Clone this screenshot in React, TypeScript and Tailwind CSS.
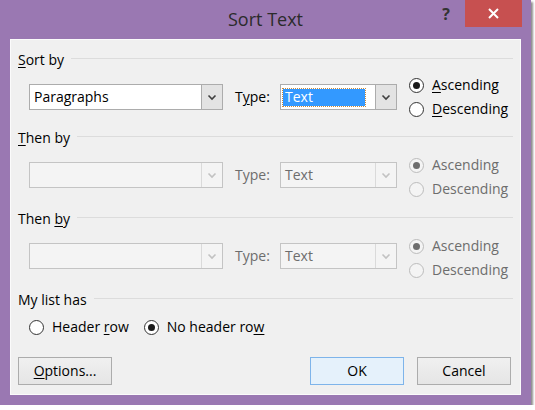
import React from 'react';

const Chevron: React.FC<{ disabled?: boolean }> = ({ disabled }) => (
  <svg width="10" height="7" viewBox="0 0 10 7" className="block">
    <polyline
      points="1.5,1.5 5,5 8.5,1.5"
      fill="none"
      stroke={disabled ? '#c2c2c2' : '#404040'}
      strokeWidth="1.6"
    />
  </svg>
);

interface ComboProps {
  value?: string;
  width: string;
  disabled?: boolean;
  focused?: boolean;
}

const Combo: React.FC<ComboProps> = ({ value, width, disabled, focused }) => (
  <div
    className={`flex h-[26px] border ${width} ${
      disabled ? 'border-[#c4c4c4] bg-[#f4f4f4]' : 'border-[#acacac] bg-white'
    }`}
  >
    <div className={`flex flex-1 items-center ${focused ? 'pl-[2px] pr-[10px]' : 'pl-[4px]'}`}>
      {focused ? (
        <span className="flex h-[17px] w-full items-center bg-[#3399ff] px-[2px] text-white outline-1 outline-dotted outline-[#c98a3c]">
          {value}
        </span>
      ) : (
        <span className={disabled ? 'text-[#6d6d6d]' : 'text-black'}>{value}</span>
      )}
    </div>
    <div
      className={`flex w-[21px] items-center justify-center border-l ${
        disabled ? 'border-[#dadada] bg-[#f4f4f4]' : 'border-[#acacac] bg-[#e3e3e3]'
      }`}
    >
      <Chevron disabled={disabled} />
    </div>
  </div>
);

const Radio: React.FC<{ checked?: boolean; disabled?: boolean }> = ({ checked, disabled }) => (
  <span
    className={`flex h-[15px] w-[15px] shrink-0 items-center justify-center rounded-full border ${
      disabled ? 'border-[#bcbcbc] bg-[#f4f4f4]' : 'border-[#333333] bg-white'
    }`}
  >
    {checked && (
      <span
        className={`h-[7px] w-[7px] rounded-full ${disabled ? 'bg-[#6d6d6d]' : 'bg-[#1a1a1a]'}`}
      />
    )}
  </span>
);

const RadioItem: React.FC<{
  checked?: boolean;
  disabled?: boolean;
  children: React.ReactNode;
}> = ({ checked, disabled, children }) => (
  <label className="flex h-[24px] items-center gap-[8px]">
    <Radio checked={checked} disabled={disabled} />
    <span className={disabled ? 'text-[#6d6d6d]' : 'text-black'}>{children}</span>
  </label>
);

const Heading: React.FC<{ children: React.ReactNode }> = ({ children }) => (
  <div className="flex h-[18px] items-center">
    <span className="text-black">{children}</span>
    <span className="mb-[3px] ml-[7px] h-px flex-1 bg-[#dcdcdc]" />
  </div>
);

const SortRow: React.FC<{ disabled?: boolean; value?: string }> = ({ disabled, value }) => (
  <div className="mt-[4px] flex h-[48px] items-center pl-[11px]">
    <Combo width="w-[194px]" value={value} disabled={disabled} />
    <span className={`ml-[12px] w-[45px] ${disabled ? 'text-[#6d6d6d]' : 'text-black'}`}>
      {disabled ? (
        'Type:'
      ) : (
        <>
          T<u className="underline-offset-[2px]">y</u>pe:
        </>
      )}
    </span>
    <Combo width="w-[117px]" value="Text" disabled={disabled} focused={!disabled} />
    <div className={`ml-[12px] flex flex-col ${disabled ? 'mt-[4px]' : ''}`}>
      <RadioItem checked disabled={disabled}>
        {disabled ? (
          'Ascending'
        ) : (
          <>
            <u className="underline-offset-[2px]">A</u>scending
          </>
        )}
      </RadioItem>
      <RadioItem disabled={disabled}>
        {disabled ? (
          'Descending'
        ) : (
          <>
            <u className="underline-offset-[2px]">D</u>escending
          </>
        )}
      </RadioItem>
    </div>
  </div>
);

const DialogButton: React.FC<{ primary?: boolean; children: React.ReactNode }> = ({
  primary,
  children
}) => (
  <button
    type="button"
    className={`flex h-[28px] w-[94px] items-center justify-center border text-black ${
      primary
        ? 'border-[#7eb4ea] bg-[#e5f1fb]'
        : 'border-[#acacac] bg-linear-to-b from-[#f0f0f0] to-[#e5e5e5]'
    }`}
  >
    {children}
  </button>
);

export default function App() {
  return (
    <div className="bg-white font-['Open_Sans',sans-serif] text-[14px] leading-none">
      <div className="flex h-[405px] w-[531px] flex-col bg-[#9a78b2] shadow-[2px_2px_2px_rgba(0,0,0,0.45)]">
        {/* title bar */}
        <div className="flex h-[39px] shrink-0">
          <div className="w-[94px]" />
          <div className="flex flex-1 items-center justify-center pb-[1px] text-[18px] text-[#2b2b2b]">
            Sort Text
          </div>
          <div className="flex w-[18px] items-start justify-center pt-[6px] text-[16px] font-bold text-[#333333]">
            ?
          </div>
          <div className="w-[10px]" />
          <div className="flex h-[27px] w-[57px] items-center justify-center bg-[#c75050]">
            <svg width="11" height="11" viewBox="0 0 11 11">
              <path d="M1 1 L10 10 M10 1 L1 10" stroke="#ffffff" strokeWidth="2" />
            </svg>
          </div>
          <div className="w-[9px]" />
        </div>

        {/* client area */}
        <div className="mx-[10px] mb-[10px] flex flex-1 flex-col bg-[#f0f0f0] px-[8px] pt-[12px] shadow-[inset_0_0_0_1px_#fbfbfb]">
          <div className="h-[78px]">
            <Heading>
              <u className="underline-offset-[2px]">S</u>ort by
            </Heading>
            <SortRow value="Paragraphs" />
          </div>
          <div className="h-[81px]">
            <Heading>
              <u className="underline-offset-[2px]">T</u>hen by
            </Heading>
            <SortRow disabled value="" />
          </div>
          <div className="h-[81px]">
            <Heading>
              Then <u className="underline-offset-[2px]">b</u>y
            </Heading>
            <SortRow disabled value="" />
          </div>
          <Heading>My list has</Heading>
          <div className="mt-[8px] flex h-[20px] items-center pl-[11px]">
            <RadioItem>
              Header <u className="underline-offset-[2px]">r</u>ow
            </RadioItem>
            <div className="ml-[15px]">
              <RadioItem checked>
                No header ro<u className="underline-offset-[2px]">w</u>
              </RadioItem>
            </div>
          </div>
          <div className="mt-[20px] flex items-center justify-between">
            <DialogButton>
              <u className="underline-offset-[2px]">O</u>ptions...
            </DialogButton>
            <div className="mr-[2px] flex gap-[13px]">
              <DialogButton primary>OK</DialogButton>
              <DialogButton>Cancel</DialogButton>
            </div>
          </div>
        </div>
      </div>
    </div>
  );
}
